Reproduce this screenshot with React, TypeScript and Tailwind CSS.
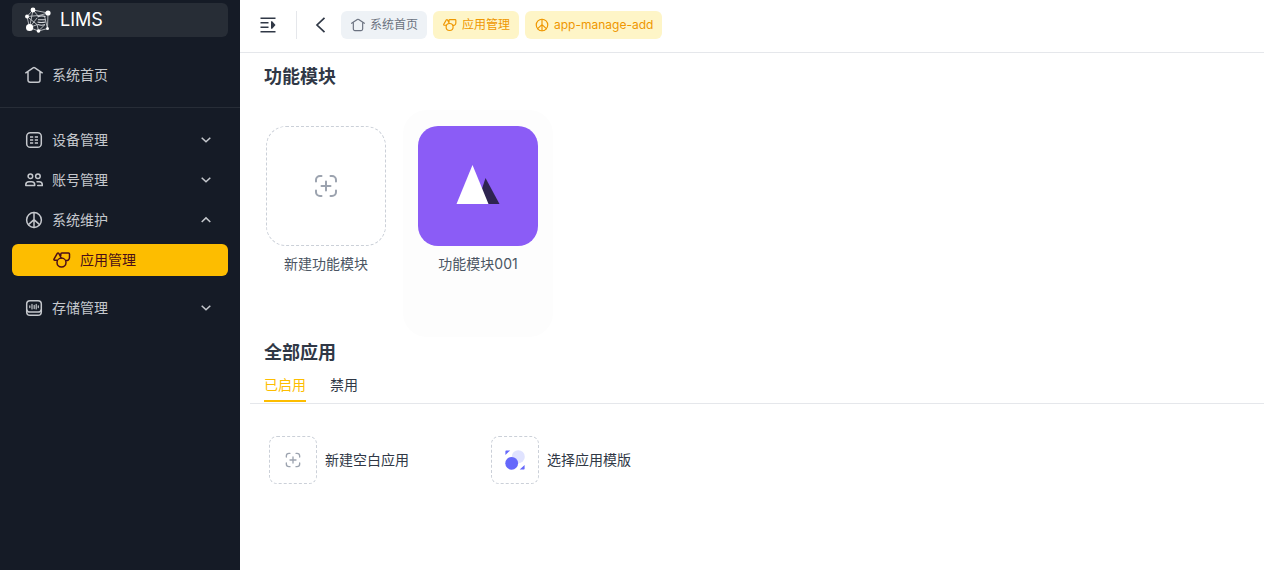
import React from "react";

type IconProps = { className?: string };

function Stroke({ className, children }: IconProps & { children: React.ReactNode }) {
  return (
    <svg viewBox="0 0 18 18" fill="none" stroke="currentColor" strokeWidth="1.5" strokeLinecap="round" strokeLinejoin="round" aria-hidden="true" className={className}>
      {children}
    </svg>
  );
}

function HomeIcon({ className }: IconProps) {
  return (
    <Stroke className={className}>
      <path d="M0.8 6.800 8.100 1.900a1.600 1.600 0 0 1 1.800 0L17.200 6.800M3 6v8.200a2 2 0 0 0 2 2h8a2 2 0 0 0 2-2V6" />
    </Stroke>
  );
}

function DeviceIcon({ className }: IconProps) {
  return (
    <Stroke className={className}>
      <rect x="1.700" y="1.700" width="14.600" height="14.600" rx="3.600" />
      <path strokeLinecap="butt" d="M5 6h3.200M9.800 6H13M5 9h3.200M9.800 9H13M5 12h3.200M9.800 12H13" />
    </Stroke>
  );
}

function UsersIcon({ className }: IconProps) {
  return (
    <Stroke className={className}>
      <circle cx="5.400" cy="5.200" r="2.300" />
      <circle cx="12.900" cy="5.200" r="2.300" />
      <path d="M.8 14.600v-.8c0-1.700 1.400-3 3.100-3h2.700c1.700 0 3.100 1.300 3.100 3v.8zM12 10.800h2.200c1.700 0 3.100 1.300 3.100 3v.8h-4.600" />
    </Stroke>
  );
}

function WheelIcon({ className }: IconProps) {
  return (
    <Stroke className={className}>
      <circle cx="9" cy="9" r="7.400" />
      <path d="M9 1.600v14.800M9 8.600l-5.600 5M9 8.600l5.600 5" />
    </Stroke>
  );
}

function ShapesIcon({ className }: IconProps) {
  return (
    <Stroke className={className}>
      <circle cx="8.500" cy="11.600" r="4.500" />
      <path d="M4 9.300H1.700a.8.800 0 0 1-.7-1.200L4.300 2.400c.4-.6 1.100-.6 1.500 0L8.200 7M7.800 4.500V3a1 1 0 0 1 1-1h6.700a1 1 0 0 1 1 1v3.500a3 3 0 0 1-3.500 3" />
    </Stroke>
  );
}

function StorageIcon({ className }: IconProps) {
  return (
    <Stroke className={className}>
      <rect x="1.700" y="1.700" width="14.600" height="14.600" rx="3.300" />
      <path d="M1.900 11c.4 1.500 1.500 2.100 3 2.100h8.200c1.500 0 2.600-.6 3-2.100" />
      <path strokeWidth="1.200" d="M4.800 6.800v1.800M7 5.300v4.600M9.200 6.300v3.300M11.200 5.300v4.600M13.300 6.800v1.800" />
    </Stroke>
  );
}

function Chevron({ up = false }: { up?: boolean }) {
  return (
    <svg viewBox="0 0 12 12" fill="none" stroke="currentColor" strokeWidth="1.500" aria-hidden="true" className="h-3 w-3">
      <path d={up ? "M1.700 8 6 3.900 10.300 8" : "M1.700 3.700 6 7.800 10.300 3.700"} />
    </svg>
  );
}

function AddFrameIcon({ className }: IconProps) {
  return (
    <svg viewBox="0 0 24 24" fill="none" stroke="currentColor" strokeWidth="2" strokeLinecap="round" aria-hidden="true" className={className}>
      <path d="M2 7.500V6a4 4 0 0 1 4-4h1.500M16.500 2H18a4 4 0 0 1 4 4v1.500M22 16.500V18a4 4 0 0 1-4 4h-1.500M7.500 22H6a4 4 0 0 1-4-4v-1.500M12 7.500v9M7.500 12h9" />
    </svg>
  );
}

function TemplateIcon() {
  return (
    <svg viewBox="0 0 20 20" aria-hidden="true" className="h-5 w-5">
      <circle cx="13.300" cy="6.700" r="6.500" fill="#e0e3ff" />
      <circle cx="6.700" cy="13.300" r="6.400" fill="#6568fb" />
      <path d="M.4 5V1.200Q.4.400 1.200.400H5.200zM19.600 15v3.800q0 .8-.8.800h-4.100z" fill="#6568fb" />
    </svg>
  );
}

function Logo() {
  return (
    <svg viewBox="0 0 26 26" fill="none" aria-hidden="true" className="h-[26px] w-[26px]">
      <g stroke="#d5d8dc" strokeWidth=".8">
        <path d="M8 3 23 6 22.500 21.500 13.500 24 4.500 20.500 2 9.500zM8 3 4.500 20.500M8 3l6 7M2 9.500l12-1M23 6l-9 2.500M4.500 20.500 12 11M4.500 20.500l8-3M13.500 24l-1.500-7M13.500 24l6-6M22.500 21.500 19.500 9M2 9.500l10 8" />
        <path strokeWidth="1.100" d="M12.500 10q3.500-2 8-.5M13 12.700h7.500M12.500 15q3.500 1 8 0M13 17.500q3.500 1.500 7 0" />
      </g>
      <g fill="#fff">
        <circle cx="8" cy="3" r="2.400" />
        <circle cx="23" cy="6" r="2.600" />
        <circle cx="2" cy="9.500" r="1.900" />
        <circle cx="4.600" cy="20.500" r="3.600" />
        <circle cx="13.500" cy="24" r="1.800" />
        <circle cx="22.500" cy="21.500" r="1.500" />
      </g>
    </svg>
  );
}

function NavItem({ icon, label, open }: { icon: React.ReactNode; label: string; open?: boolean }) {
  return (
    <button type="button" aria-expanded={open} className="flex h-10 w-full items-center gap-[9px] px-[13px] text-left text-[#c5c8cd]">
      {icon}
      <span className="flex-1">{label}</span>
      <span className="mr-[3px]"><Chevron up={open} /></span>
    </button>
  );
}

const tagBase = "flex h-7 items-center gap-[5px] rounded-md pr-[9px] pl-2.5 text-xs";
const dashed = "flex items-center justify-center border border-dashed border-[#cbd0d8] text-[#9ca3af]";

export default function App() {
  return (
    <div className="flex min-h-screen bg-white font-['Inter','Noto_Sans_CJK_SC',sans-serif] text-sm text-[#303846]">
      <aside className="w-60 shrink-0 bg-[#151b26]">
        <div className="px-3 pt-[3px]">
          <a href="#home" className="flex h-[34px] items-center gap-[9px] rounded-md bg-[#272d36] pl-[13px] text-white">
            <Logo />
            <span className="text-lg leading-6">LIMS</span>
          </a>
        </div>
        <nav>
          <div className="border-b border-[#272d37] px-3 pt-[18px] pb-3">
            <a href="#home" className="flex h-10 items-center gap-[9px] px-[13px] text-[#c5c8cd]">
              <HomeIcon className="h-[18px] w-[18px]" />
              系统首页
            </a>
          </div>
          <div className="px-3 pt-3">
            <NavItem icon={<DeviceIcon className="h-[18px] w-[18px]" />} label="设备管理" open={false} />
            <NavItem icon={<UsersIcon className="h-[18px] w-[18px]" />} label="账号管理" open={false} />
            <NavItem icon={<WheelIcon className="h-[18px] w-[18px]" />} label="系统维护" open />
            <a href="#apps" aria-current="page" className="mt-1 mb-3 flex h-8 items-center gap-[9px] rounded-md bg-[#fdbd00] pl-[41px] text-[#4a0d18]">
              <ShapesIcon className="h-[18px] w-[18px]" />
              应用管理
            </a>
            <NavItem icon={<StorageIcon className="h-[18px] w-[18px]" />} label="存储管理" open={false} />
          </div>
        </nav>
      </aside>

      <div className="min-w-0 flex-1">
        <header className="flex h-[53px] items-center border-b border-[#e5e7eb] pb-0.5 pl-5">
          <button type="button" aria-label="折叠菜单">
            <svg viewBox="0 0 16 16" fill="none" stroke="currentColor" strokeWidth="1.500" className="h-4 w-4">
              <path d="M.5 1.300h15M.5 5.800h8M.5 10.200h8M.5 14.700h15" />
              <path d="M11 4.300v7.400h1.200l3.300-3.700-3.300-3.700z" fill="currentColor" stroke="none" />
            </svg>
          </button>
          <span className="ml-5 h-7 w-px bg-[#e5e7eb]" />
          <button type="button" aria-label="返回" className="ml-4 mr-3">
            <svg viewBox="0 0 16 16" fill="none" stroke="currentColor" strokeWidth="1.700" className="h-4 w-4">
              <path d="M11.500.8 4 8l7.500 7.200" />
            </svg>
          </button>
          <nav className="flex gap-1.5" aria-label="标签页">
            <a href="#home" className={`${tagBase} bg-[#eef2f6] text-[#6b7280]`}>
              <HomeIcon className="h-3.5 w-3.5" />系统首页
            </a>
            <a href="#apps" className={`${tagBase} bg-[#fef5c7] text-[#ef9700]`}>
              <ShapesIcon className="h-3.5 w-3.5" />应用管理
            </a>
            <a href="#add" className={`${tagBase} bg-[#fef5c7] text-[#ef9700]`}>
              <WheelIcon className="h-3.5 w-3.5" />app-manage-add
            </a>
          </nav>
        </header>

        <main className="pl-2.5">
          <section>
            <h1 className="pt-[10px] pl-[14px] text-lg leading-7 font-bold">功能模块</h1>
            <div className="mt-[19px] flex flex-wrap gap-0.5 pl-px">
              <button type="button" className="flex h-[227px] w-[150px] flex-col items-center gap-2 rounded-3xl pt-4 leading-5 text-[#4b5563]">
                <span className={`${dashed} h-[120px] w-[120px] rounded-[20px]`}>
                  <AddFrameIcon className="h-6 w-6" />
                </span>
                新建功能模块
              </button>
              <button type="button" className="flex h-[227px] w-[150px] flex-col items-center gap-2 rounded-3xl bg-[#fdfdfd] pt-4 leading-5 text-[#4b5563]">
                <span className="flex h-[120px] w-[120px] items-center justify-center rounded-[20px] bg-[#8b5cf6]">
                  <svg viewBox="0 0 44 42" className="h-[42px] w-11" aria-hidden="true">
                    <path d="M29.500 13 43.500 39H21z" fill="#2e2450" />
                    <path d="M16.500 0 32.500 39H.5z" fill="#fff" />
                  </svg>
                </span>
                功能模块001
              </button>
            </div>
          </section>

          <section>
            <h2 className="pt-0.5 pl-[14px] text-lg leading-7 font-bold">全部应用</h2>
            <div role="tablist" className="flex gap-6 border-b border-[#e5e7eb] pt-1.5 pl-[14px]">
              <button type="button" role="tab" aria-selected="true" className="mb-px h-[29px] border-b-2 border-[#fdbd00] pb-1 leading-5 text-[#fdbd00]">已启用</button>
              <button type="button" role="tab" aria-selected="false" className="mb-px h-[29px] pb-1.5 leading-5">禁用</button>
            </div>
            <div className="flex flex-wrap pt-8 pl-[19px]">
              <button type="button" className="flex w-[222px] items-center gap-2 text-left">
                <span className={`${dashed} h-12 w-12 rounded-lg`}>
                  <AddFrameIcon className="h-4 w-4" />
                </span>
                新建空白应用
              </button>
              <button type="button" className="flex w-[222px] items-center gap-2 text-left">
                <span className={`${dashed} h-12 w-12 rounded-lg`}>
                  <TemplateIcon />
                </span>
                选择应用模版
              </button>
            </div>
          </section>
        </main>
      </div>
    </div>
  );
}
